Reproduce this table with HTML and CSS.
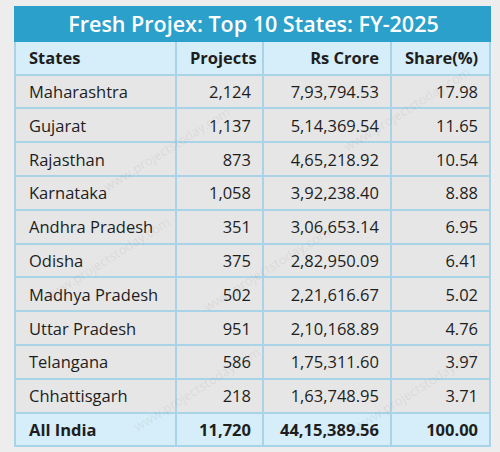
FILE: index.html
```html
<!DOCTYPE html>
<html>
<head>
  <meta charset="UTF-8" />
  <title>Fresh Projex: Top 10 States</title>
  <link rel="stylesheet" href="styles.css">
</head>
<body>
  <div class="sheet">
    <table class="states">
      <colgroup>
        <col class="c-state">
        <col class="c-proj">
        <col class="c-crore">
        <col class="c-share">
      </colgroup>
      <thead>
        <tr class="title-row">
          <th colspan="4">Fresh Projex: Top 10 States: FY-2025</th>
        </tr>
        <tr class="head-row">
          <th class="left">States</th>
          <th>Projects</th>
          <th>Rs Crore</th>
          <th>Share(%)</th>
        </tr>
      </thead>
      <tbody>
        <tr><td class="left">Maharashtra</td><td>2,124</td><td>7,93,794.53</td><td>17.98</td></tr>
        <tr><td class="left">Gujarat</td><td>1,137</td><td>5,14,369.54</td><td>11.65</td></tr>
        <tr><td class="left">Rajasthan</td><td>873</td><td>4,65,218.92</td><td>10.54</td></tr>
        <tr><td class="left">Karnataka</td><td>1,058</td><td>3,92,238.40</td><td>8.88</td></tr>
        <tr><td class="left">Andhra Pradesh</td><td>351</td><td>3,06,653.14</td><td>6.95</td></tr>
        <tr><td class="left">Odisha</td><td>375</td><td>2,82,950.09</td><td>6.41</td></tr>
        <tr><td class="left">Madhya Pradesh</td><td>502</td><td>2,21,616.67</td><td>5.02</td></tr>
        <tr><td class="left">Uttar Pradesh</td><td>951</td><td>2,10,168.89</td><td>4.76</td></tr>
        <tr><td class="left">Telangana</td><td>586</td><td>1,75,311.60</td><td>3.97</td></tr>
        <tr><td class="left">Chhattisgarh</td><td>218</td><td>1,63,748.95</td><td>3.71</td></tr>
      </tbody>
      <tfoot>
        <tr class="total-row"><td class="left">All India</td><td>11,720</td><td>44,15,389.56</td><td>100.00</td></tr>
      </tfoot>
    </table>

    <!-- watermark -->
    <span class="mark" style="left:100px; top:180px;">www.projectstoday.com</span>
    <span class="mark" style="left:40px; top:290px;">www.projectstoday.com</span>
    <span class="mark" style="left:200px; top:300px;">www.projectstoday.com</span>
    <span class="mark" style="left:130px; top:420px;">www.projectstoday.com</span>
    <span class="mark" style="left:340px; top:140px;">www.projectstoday.com</span>
    <span class="mark" style="left:350px; top:420px;">www.projectstoday.com</span>
  </div>
</body>
</html>
```

FILE: styles.css
```css
body {
  background-color: #ededed;
  margin: 0;
  font-family: 'Open Sans', 'Noto Sans', sans-serif;
  color: #1e1e1e;
}
.sheet {
  position: relative;
  padding: 6px 0 0 14px;
  overflow: hidden;
  height: 446px;
}
.states {
  border-collapse: collapse;
  width: 475px;
  table-layout: fixed;
  font-size: 16.5px;
}
.c-state { width: 161px; }
.c-proj { width: 87px; }
.c-crore { width: 128px; }
.c-share { width: 99px; }
.states th,
.states td {
  border: 2px solid #a9d3e7;
  height: 33.8px;
  padding: 0 11px 0 13px;
  text-align: right;
  box-sizing: border-box;
  white-space: nowrap;
}
.states .left {
  text-align: left;
}
.states td {
  background-color: #e6e6e6;
}
.title-row th {
  background-color: #2ba0cb;
  border-color: #2ba0cb;
  color: white;
  font-size: 21.5px;
  text-align: center;
  font-weight: 600;
}
.head-row th {
  background-color: #d5eef9;
  font-weight: 700;
}
.total-row td {
  background-color: #d5eef9;
  font-weight: 700;
}
.mark {
  position: absolute;
  font-size: 13px;
  color: rgba(120, 120, 120, 0.13);
  transform: rotate(-32deg);
  transform-origin: left top;
  white-space: nowrap;
  pointer-events: none;
}
```
